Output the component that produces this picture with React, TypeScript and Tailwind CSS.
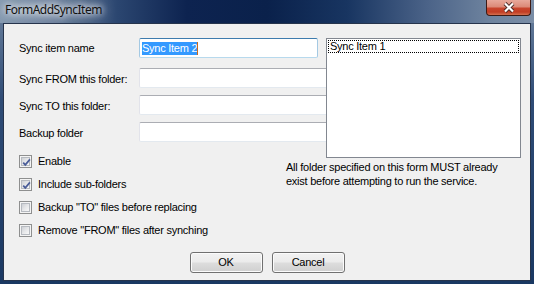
import React from 'react';

function TextBox({ focused = false, className = '', children }: { focused?: boolean; className?: string; children?: React.ReactNode }) {
  const border = focused
    ? 'border-t-[#3d7bad] border-x-[#a4c9e3] border-b-[#b7d9ed]'
    : 'border-t-[#abadb3] border-x-[#e2e3ea] border-b-[#e3e9ef]';
  return (
    <div className={`flex h-[20px] items-center rounded-[2px] border bg-white pl-[2px] ${border} ${className}`}>
      {children}
    </div>
  );
}

function CheckBox({ checked, label }: { checked: boolean; label: string }) {
  return (
    <div className="flex h-[13px] items-center gap-[6px]">
      <span className="relative flex h-[13px] w-[13px] shrink-0 items-center justify-center border border-[#8e8f8f] bg-[#f4f4f4]">
        <span className="h-[9px] w-[9px] border border-[#b6bac0] bg-[linear-gradient(135deg,#cdd0d5_0%,#e6e7e9_50%,#f8f8f8_100%)]" />
        {checked && (
          <svg className="absolute left-[1px] top-[1px]" width="11" height="11" viewBox="0 0 11 11">
            <path d="M2.2 5.6 L4.3 7.9 L8.9 2.4" fill="none" stroke="#4a5d99" strokeWidth="1.7" />
          </svg>
        )}
      </span>
      <span>{label}</span>
    </div>
  );
}

function Button({ children }: { children: React.ReactNode }) {
  return (
    <button className="flex h-[21px] w-[73px] items-center justify-center rounded-[3px] border border-[#707070] bg-[linear-gradient(180deg,#f2f2f2_0%,#ebebeb_48%,#dddddd_52%,#cfcfcf_100%)] shadow-[inset_0_0_0_1px_#fbfbfb] text-black">
      {children}
    </button>
  );
}

export default function App() {
  const rows = ['Sync FROM this folder:', 'Sync TO this folder:', 'Backup folder'];

  return (
    <div className="flex h-[284px] w-[534px] flex-col overflow-hidden bg-[linear-gradient(180deg,#6f84a0_0%,#2f4c76_35%,#1a3862_100%)] font-['Liberation_Sans',Arial,sans-serif] text-[11px] tracking-[-0.25px] text-black">
      {/* title bar */}
      <div className="flex h-[23px] shrink-0 items-start justify-between bg-[linear-gradient(90deg,#8599b0_0%,#6c819d_10%,#2b4670_22%,#0d2350_35%,#0a214b_50%,#183561_65%,#4b6388_80%,#6f849f_92%,#7a8da6_100%)]">
        <span className="pl-[5px] pt-[2px] font-['Noto_Sans',sans-serif] text-[12px] leading-[16px] tracking-[-0.5px] text-[#111] [text-shadow:0_0_6px_#fff,0_0_10px_#fff,0_0_16px_rgba(255,255,255,0.85)]">
          FormAddSyncItem
        </span>
        <div className="mr-[3px] flex h-[16px] w-[45px] items-center justify-center rounded-b-[4px] border border-t-0 border-[#3d1a14] bg-[linear-gradient(180deg,#e8a99b_0%,#dc8a78_45%,#c8452d_55%,#c23d24_80%,#d4704f_100%)]">
          <svg width="14" height="11" viewBox="0 0 14 11">
            <path d="M3 1.5 L11 9.5 M11 1.5 L3 9.5" stroke="#4a2a26" strokeWidth="4" />
            <path d="M3 1.5 L11 9.5 M11 1.5 L3 9.5" stroke="#fff" strokeWidth="2.2" />
          </svg>
        </div>
      </div>

      {/* frame + client */}
      <div className="flex flex-1 flex-col px-[3px] pb-[3px]">
        <div className="flex flex-1 flex-col border border-[#26344c] bg-[#f0f0f0]">
          <div className="flex items-start pl-[15px] pt-[14px]">
            {/* left column */}
            <div className="flex w-[307px] flex-col">
              <div className="flex h-[20px] items-center">
                <span className="w-[120px]">Sync item name</span>
                <TextBox focused className="w-[179px]">
                  <span className="bg-[#3399ff] leading-[13px] text-white">Sync Item 2</span>
                  <span className="h-[13px] w-[1px] bg-[#cc6a1a]" />
                </TextBox>
              </div>
              {rows.map((r, i) => (
                <div key={r} className={`flex h-[20px] items-center ${i === 0 ? 'mt-[10px]' : 'mt-[7px]'}`}>
                  <span className="w-[120px] pt-[2px]">{r}</span>
                  <TextBox className="flex-1 rounded-r-none border-r-0" />
                </div>
              ))}
              <div className="mt-[13px] flex flex-col gap-[10px]">
                <CheckBox checked label="Enable" />
                <CheckBox checked label="Include sub-folders" />
                <CheckBox checked={false} label={'Backup "TO" files before replacing'} />
                <CheckBox checked={false} label={'Remove "FROM" files after synching'} />
              </div>
            </div>

            {/* right column */}
            <div className="flex w-[195px] flex-col">
              <div className="h-[120px] border border-[#828790] bg-white p-[1px]">
                <div className="flex h-[13px] items-center border border-dotted border-black pl-[1px] leading-[11px]">
                  Sync Item 1
                </div>
              </div>
              <p className="ml-[-40px] mt-[2px] w-[220px] leading-[14px]">
                All folder specified on this form MUST already exist before attempting to run the service.
              </p>
            </div>
          </div>

          <div className="mt-[15px] flex justify-center gap-[9px]">
            <Button>OK</Button>
            <Button>Cancel</Button>
          </div>
        </div>
      </div>
    </div>
  );
}
